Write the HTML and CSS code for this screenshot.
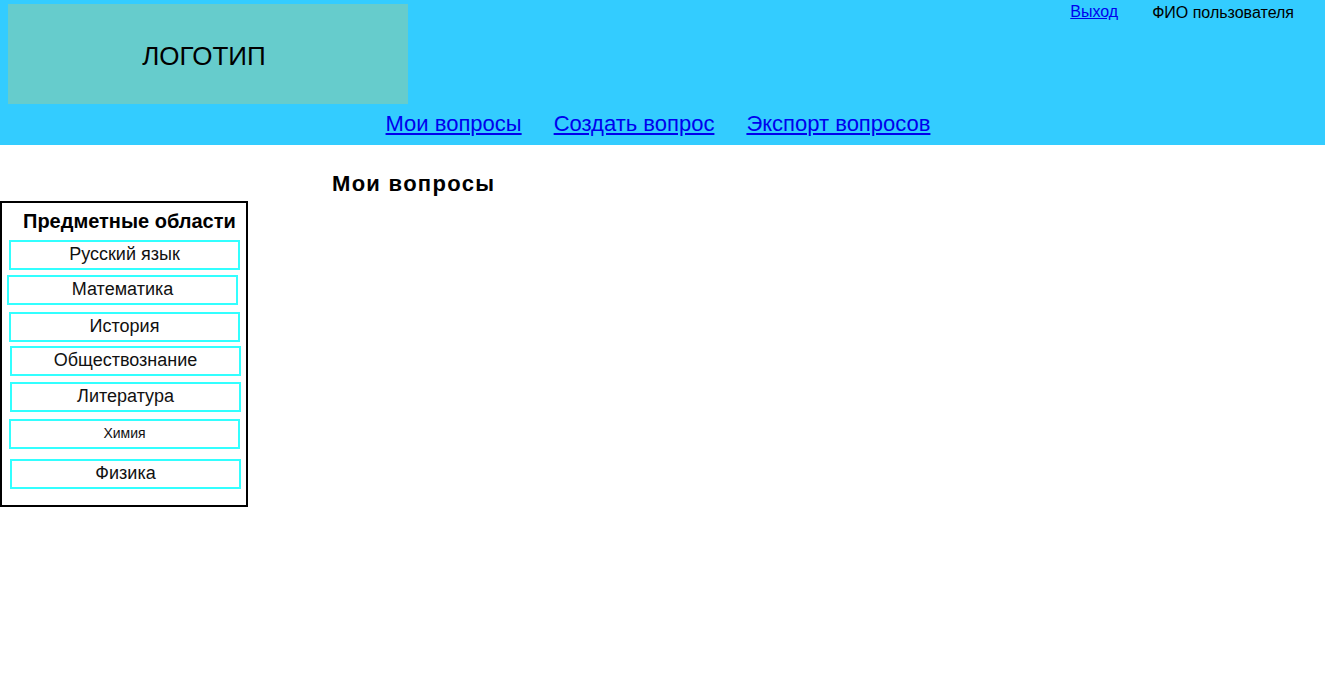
FILE: index.html
```html
<!DOCTYPE html>
<html lang="ru">

<head>
    <meta charset="UTF-8">
    <meta name="viewport" content="width=device-width, initial-scale=1.0">
    <title>Мои вопросы</title>
    <link rel="stylesheet" href="styles.css">
</head>

<body>
    <header class="header">
        <div class="header-top">
            <div class="logo">ЛОГОТИП</div>
            <div class="user">
                <a href="#" class="logout">Выход</a>
                <span class="user-name">ФИО пользователя</span>
            </div>
        </div>
        <nav class="nav">
            <a href="#">Мои вопросы</a>
            <a href="#">Создать вопрос</a>
            <a href="#">Экспорт вопросов</a>
        </nav>
    </header>

    <main class="content">
        <h2 class="page-title">Мои вопросы</h2>
        <div class="subjects">
            <div class="subjects-title">Предметные области</div>
            <div class="subject">Русский язык</div>
            <div class="subject">Математика</div>
            <div class="subject">История</div>
            <div class="subject">Обществознание</div>
            <div class="subject">Литература</div>
            <div class="subject subject-small">Химия</div>
            <div class="subject">Физика</div>
        </div>
    </main>
</body>

</html>
```

FILE: styles.css
```css
body {
    margin: 0;
    font-family: "Liberation Sans", Arial, sans-serif;
    color: #000;
}

.header {
    background-color: #33ccff;
    height: 145px;
}

.header-top {
    display: flex;
    justify-content: space-between;
    align-items: flex-start;
    padding: 0 31px 0 8px;
}

.logo {
    margin-top: 4px;
    width: 400px;
    height: 100px;
    background-color: #66cccc;
    display: flex;
    align-items: center;
    justify-content: center;
    font-size: 26px;
    padding: 4px 8px 0 0;
    box-sizing: border-box;
}

.user {
    display: flex;
    align-items: flex-start;
    gap: 34px;
    font-size: 16px;
    line-height: 18px;
    padding-top: 3px;
}

.logout {
    color: #0000ee;
}

.user-name {
    padding-top: 1px;
}

.nav {
    display: flex;
    justify-content: center;
    gap: 32px;
    padding: 7px 9px 0 0;
    font-size: 22px;
    line-height: 26px;
}

.nav a {
    color: #0000ee;
}

.page-title {
    margin: 26px 0 4px 332px;
    font-size: 22px;
    line-height: 26px;
    letter-spacing: 1.3px;
}

.subjects {
    width: 248px;
    box-sizing: border-box;
    border: 2px solid #000;
    padding-bottom: 16px;
}

.subjects-title {
    padding: 6px 0 0 21px;
    font-size: 20px;
    line-height: 24px;
    font-weight: bold;
}

.subject {
    box-sizing: border-box;
    width: 231px;
    height: 30px;
    border: 2px solid #33ffff;
    display: flex;
    align-items: center;
    justify-content: center;
    font-size: 18px;
    color: #111;
    margin-left: 7px;
    padding-bottom: 2px;
}

.subject-small {
    font-size: 14px;
}

.subject:nth-child(2) { margin-top: 7px; }
.subject:nth-child(3) { margin-top: 5px; margin-left: 5px; }
.subject:nth-child(4) { margin-top: 7px; }
.subject:nth-child(5) { margin-top: 4px; margin-left: 8px; }
.subject:nth-child(6) { margin-top: 6px; margin-left: 8px; }
.subject:nth-child(7) { margin-top: 7px; }
.subject:nth-child(8) { margin-top: 10px; margin-left: 8px; }
```
